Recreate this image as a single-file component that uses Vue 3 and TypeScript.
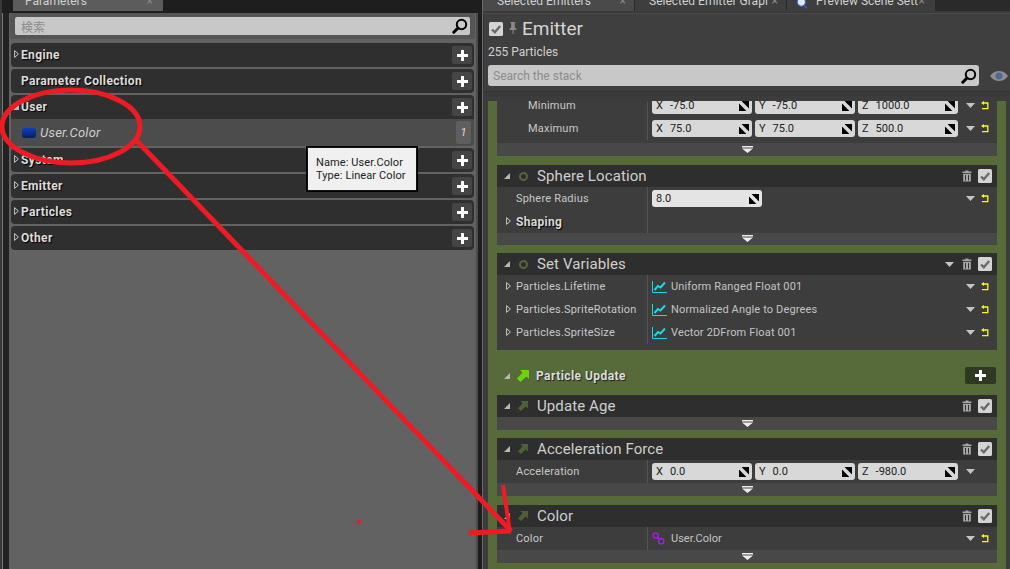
<script setup lang="ts">
interface Row {
  label: string
  kind: 'vec' | 'num' | 'curve' | 'link' | 'group'
  values?: string[]
  text?: string
  expand?: boolean
  indent?: boolean
  noReset?: boolean
}

interface Panel {
  title?: string
  icon?: 'circle' | 'arrow'
  menu?: boolean
  rows: Row[]
  footer: boolean
  cls?: string
}

const sections = ['Engine', 'Parameter Collection', 'User', 'System', 'Emitter', 'Particles', 'Other']

const firstPanels: Panel[] = [
  {
    cls: 'clipped',
    rows: [
      { label: 'Minimum', kind: 'vec', indent: true, values: ['X', '-75.0', 'Y', '-75.0', 'Z', '1000.0'] },
      { label: 'Maximum', kind: 'vec', indent: true, values: ['X', '75.0', 'Y', '75.0', 'Z', '500.0'] },
    ],
    footer: true,
  },
  {
    title: 'Sphere Location',
    icon: 'circle',
    cls: 'tight nudge',
    rows: [
      { label: 'Sphere Radius', kind: 'num', text: '8.0' },
      { label: 'Shaping', kind: 'group', expand: true },
    ],
    footer: true,
  },
  {
    title: 'Set Variables',
    icon: 'circle',
    menu: true,
    cls: 'padded',
    rows: [
      { label: 'Particles.Lifetime', kind: 'curve', expand: true, text: 'Uniform Ranged Float 001' },
      { label: 'Particles.SpriteRotation', kind: 'curve', expand: true, text: 'Normalized Angle to Degrees' },
      { label: 'Particles.SpriteSize', kind: 'curve', expand: true, text: 'Vector 2DFrom Float 001' },
    ],
    footer: false,
  },
]

const updatePanels: Panel[] = [
  { title: 'Update Age', icon: 'arrow', rows: [], footer: true },
  {
    title: 'Acceleration Force',
    icon: 'arrow',
    rows: [{ label: 'Acceleration', kind: 'vec', noReset: true, values: ['X', '0.0', 'Y', '0.0', 'Z', '-980.0'] }],
    footer: true,
  },
  {
    title: 'Color',
    icon: 'arrow',
    cls: 'nudge',
    rows: [{ label: 'Color', kind: 'link', text: 'User.Color' }],
    footer: true,
  },
]

const allPanels = [firstPanels, updatePanels]

function pairs(values: string[]) {
  const out: { axis: string; val: string }[] = []
  for (let i = 0; i < values.length; i += 2) out.push({ axis: values[i], val: values[i + 1] })
  return out
}
</script>

<template>
  <div class="app">
    <svg class="defs" width="0" height="0">
      <symbol id="spin" viewBox="0 0 10 10">
        <path d="M2.6 0H10V7.4L7.8 5.2L5 2.4ZM0 2.6L7.4 10H0Z" fill="#000" />
      </symbol>
      <symbol id="lens" viewBox="0 0 16 16">
        <circle cx="9.5" cy="6.5" r="4.7" fill="none" stroke="#000" stroke-width="2" />
        <path d="M6 10L1.8 14.2" stroke="#000" stroke-width="3" stroke-linecap="round" />
      </symbol>
      <symbol id="chev" viewBox="0 0 11 7">
        <path d="M0 0H11V1.4H0ZM0 2.6H11L5.5 7Z" fill="#eee" />
      </symbol>
      <symbol id="drop" viewBox="0 0 9 5">
        <path d="M0 0H9L4.5 5Z" fill="#c4c4c4" />
      </symbol>
      <symbol id="reset" viewBox="0 0 8 9">
        <path d="M2.6 2H6.8V7.6H1" fill="none" stroke="#f8f820" stroke-width="1.3" />
        <path d="M3 0V4L0 2Z" fill="#f8f820" />
      </symbol>
      <symbol id="trash" viewBox="0 0 10 12">
        <path d="M3.5 0.5H6.5V1.5H9.5V3H0.5V1.5H3.5ZM1.2 3.8H8.8V11.5H1.2ZM3 5V10.5H4V5ZM6 5V10.5H7V5Z" fill="#a8a8a8" fill-rule="evenodd" />
      </symbol>
      <symbol id="check" viewBox="0 0 14 14">
        <rect width="14" height="14" rx="1.5" fill="#d4d4d4" />
        <path d="M3 7.5L5.8 10.2L11.2 4" fill="none" stroke="#6a6a6a" stroke-width="2.4" />
      </symbol>
      <symbol id="arrow-icon" viewBox="0 0 12 12">
        <path d="M3 0H12V9L9.4 6.6L3.4 12L0 8.6L5.6 2.6Z" fill="currentColor" />
      </symbol>
      <symbol id="curve" viewBox="0 0 15 12">
        <path d="M0.5 0V11.5H15" fill="none" stroke="#19d8e8" stroke-width="1" />
        <path d="M2.5 9L6 5L8.5 6.5L13 1.5" fill="none" stroke="#19d8e8" stroke-width="2" />
      </symbol>
      <symbol id="link" viewBox="0 0 13 13">
        <circle cx="3.6" cy="3.6" r="2.6" fill="none" stroke="#a020d8" stroke-width="1.5" />
        <circle cx="9.2" cy="9.2" r="2.6" fill="none" stroke="#a020d8" stroke-width="1.5" />
        <path d="M5.4 5.4L7.4 7.4" stroke="#a020d8" stroke-width="1.5" />
      </symbol>
      <symbol id="corner" viewBox="0 0 7 7">
        <path d="M7 0V7H0Z" fill="#b8b8b8" />
      </symbol>
      <symbol id="closed" viewBox="0 0 5 8">
        <path d="M0.6 0.6L4.4 4L0.6 7.4Z" fill="none" stroke="#d8d8d8" stroke-width="0.9" />
      </symbol>
      <symbol id="plus" viewBox="0 0 11 11">
        <path d="M4 0H7V4H11V7H7V11H4V7H0V4H4Z" fill="#fff" />
      </symbol>
    </svg>

    <!-- left side -->
    <div class="left">
      <div class="tabs">
        <div class="tab param-tab"><span>Parameters</span><i>×</i></div>
      </div>
      <div class="left-body">
        <div class="search-wrap">
          <div class="search">
            <span class="placeholder cjk">検索</span>
            <svg class="lens"><use href="#lens" /></svg>
          </div>
        </div>
        <div class="sections">
          <template v-for="name in sections" :key="name">
            <div class="section" :class="{ open: name === 'User' }">
              <svg v-if="name === 'User'" class="tri-open"><use href="#corner" /></svg>
              <svg v-else-if="name !== 'Parameter Collection'" class="tri"><use href="#closed" /></svg>
              <span class="sec-name">{{ name }}</span>
              <button class="plus"><svg><use href="#plus" /></svg></button>
            </div>
            <div v-if="name === 'User'" class="param-row">
              <span class="pill"></span>
              <span class="param-name">User.Color</span>
              <span class="count">1</span>
            </div>
          </template>
        </div>
      </div>
    </div>

    <!-- right side -->
    <div class="right">
      <div class="tabs r-tabs">
        <div class="tab r-tab"><span>Selected Emitters</span><i>×</i></div>
        <div class="tab r-tab off"><span>Selected Emitter Grapl</span><i>×</i></div>
        <div class="tab r-tab off prev">
          <svg class="tab-icon" viewBox="0 0 16 16">
            <circle cx="7" cy="3" r="6" fill="#dfe8f5" stroke="#3a62c0" stroke-width="1.6" />
            <path d="M11 8L15 12" stroke="#3a62c0" stroke-width="2" />
          </svg>
          <span>Preview Scene Sett</span><i>×</i>
        </div>
      </div>

      <div class="head">
        <div class="head-top">
          <svg class="head-check"><use href="#check" /></svg>
          <svg class="pin" viewBox="0 0 8 12">
            <path d="M1.5 0H6.5V1H5.8V5.5L7.5 7V8H4.5V12H3.5V8H0.5V7L2.2 5.5V1H1.5Z" fill="#8a8a8a" />
          </svg>
          <span class="emitter">Emitter</span>
        </div>
        <div class="count-text">255 Particles</div>
        <div class="stack-search">
          <div class="search dark-text">
            <span class="placeholder">Search the stack</span>
            <svg class="lens"><use href="#lens" /></svg>
          </div>
          <svg class="eye" viewBox="0 0 18 10">
            <path d="M0 5C3 1 6 0 9 0C12 0 15 1 18 5C15 9 12 10 9 10C6 10 3 9 0 5Z" fill="#8f8f8f" />
            <circle cx="9" cy="5" r="3.6" fill="#4e6a96" />
          </svg>
        </div>
      </div>

      <div class="stack">
        <div class="green">
          <template v-for="(group, gi) in allPanels" :key="gi">
            <div v-if="gi === 1" class="update-head">
              <svg class="corner update-corner"><use href="#corner" /></svg>
              <svg class="update-icon"><use href="#arrow-icon" /></svg>
              <span class="update-title">Particle Update</span>
              <button class="update-add"><svg><use href="#plus" /></svg></button>
            </div>
            <div class="group">
              <div v-for="(p, pi) in group" :key="pi" class="panel" :class="p.cls">
                <div v-if="p.title" class="panel-head">
                  <svg class="corner"><use href="#corner" /></svg>
                  <svg v-if="p.icon === 'arrow'" class="p-arrow"><use href="#arrow-icon" /></svg>
                  <span v-else class="p-circle"></span>
                  <span class="panel-title">{{ p.title }}</span>
                  <svg v-if="p.menu" class="drop head-drop"><use href="#drop" /></svg>
                  <svg class="trash"><use href="#trash" /></svg>
                  <svg class="p-check"><use href="#check" /></svg>
                </div>
                <div class="rows">
                  <div v-for="r in p.rows" :key="r.label" class="row">
                    <div class="row-name" :class="{ indent: r.indent }">
                      <svg v-if="r.expand" class="row-tri"><use href="#closed" /></svg>
                      <span :class="{ strong: r.kind === 'group' }">{{ r.label }}</span>
                    </div>
                    <div class="row-value">
                      <template v-if="r.kind === 'vec'">
                        <div v-for="f in pairs(r.values || [])" :key="f.axis" class="field">
                          <span class="axis">{{ f.axis }}</span>
                          <span>{{ f.val }}</span>
                          <svg class="spin"><use href="#spin" /></svg>
                        </div>
                      </template>
                      <div v-else-if="r.kind === 'num'" class="field wide">
                        <span>{{ r.text }}</span>
                        <svg class="spin"><use href="#spin" /></svg>
                      </div>
                      <template v-else-if="r.kind === 'curve'">
                        <svg class="curve"><use href="#curve" /></svg>
                        <span class="val-text">{{ r.text }}</span>
                      </template>
                      <template v-else-if="r.kind === 'link'">
                        <svg class="link"><use href="#link" /></svg>
                        <span class="val-text link-text">{{ r.text }}</span>
                      </template>
                    </div>
                    <div v-if="r.kind !== 'group'" class="row-actions">
                      <svg class="drop"><use href="#drop" /></svg>
                      <svg class="reset" :class="{ hide: r.noReset }"><use href="#reset" /></svg>
                    </div>
                  </div>
                </div>
                <div v-if="p.footer" class="panel-foot">
                  <svg class="chev"><use href="#chev" /></svg>
                </div>
              </div>
            </div>
          </template>
        </div>
      </div>
    </div>

    <!-- tooltip over the list -->
    <div class="tooltip">
      <div>Name: User.Color</div>
      <div>Type: Linear Color</div>
    </div>

    <!-- hand drawn red markup -->
    <svg class="markup" viewBox="0 0 1010 569">
      <ellipse cx="71" cy="126.5" rx="69" ry="36.5" fill="none" stroke="#ed1c24" stroke-width="5" />
      <path d="M137 141L511 531" fill="none" stroke="#ed1c24" stroke-width="5" />
      <path d="M503 485L510 532" fill="none" stroke="#ed1c24" stroke-width="4" />
      <path d="M469 533L511 531" fill="none" stroke="#ed1c24" stroke-width="5" />
      <circle cx="359" cy="522" r="2.2" fill="#ed1c24" />
    </svg>
  </div>
</template>

<style scoped>
.app {
  position: relative;
  width: 1010px;
  height: 569px;
  display: flex;
  overflow: hidden;
  background: #1e1e1e;
  font-family: Roboto, "Noto Sans CJK JP", sans-serif;
  font-size: 11px;
  color: #c8c8c8;
}

.defs {
  position: absolute;
}

button {
  border: none;
  padding: 0;
  font-family: inherit;
}

/* tabs */
.tabs {
  height: 11px;
  display: flex;
  flex-shrink: 0;
  overflow: hidden;
}

.tab {
  height: 11px;
  line-height: 2px;
  display: flex;
  position: relative;
  font-size: 12px;
  background: #5c5c5c;
  color: #d0d0d0;
  overflow: hidden;
}

.tab i {
  position: absolute;
  font-style: normal;
  color: #888;
}

.param-tab {
  width: 150px;
  margin-left: 11px;
  padding-left: 12px;
  box-sizing: border-box;
}

.param-tab i {
  right: 10px;
}

.r-tabs {
  background: #2a2a2a;
}

.r-tab {
  width: 151px;
  padding-left: 14px;
  box-sizing: border-box;
  margin-right: 1px;
  background: #4a4a4a;
}

.r-tab i {
  right: 8px;
}

.r-tab.off {
  background: #3e3e3e;
}

.r-tab.prev {
  width: 148px;
  padding-left: 7px;
}

.r-tab.prev i {
  right: 10px;
}

.tab-icon {
  width: 16px;
  height: 11px;
  margin-right: 6px;
}

/* left */
.left {
  width: 478px;
  flex-shrink: 0;
  display: flex;
  flex-direction: column;
  border-left: 2px solid #3a3a3a;
  box-sizing: border-box;
}

.left-body {
  flex: 1;
  margin: 2px 0 0 7px;
  padding: 0 2px 0 2px;
  background: #626262;
  border-left: 0;
  border-right: 2px solid #4c4c4c;
  box-shadow: -6px 0 0 #222, -7px 0 0 #777;
}

.search-wrap {
  margin: 0 -1px 4px -1px;
  padding: 4px 5px;
  height: 18px;
  background: #555;
  border-radius: 3px;
}

.search {
  flex: 1;
  height: 100%;
  display: flex;
  align-items: center;
  padding: 0 2px 0 6px;
  background: #c8c8c8;
  border-radius: 2px;
  box-sizing: border-box;
}

.placeholder {
  flex: 1;
  color: #8c8c8c;
  font-size: 12px;
}

.lens {
  width: 16px;
  height: 16px;
}

.sections {
  display: flex;
  flex-direction: column;
}

.section {
  height: 24px;
  margin-bottom: 2px;
  display: flex;
  align-items: center;
  position: relative;
  padding: 0 2px 0 10px;
  background: #2f2f2f;
  border-radius: 4px;
}

.section.open {
  margin-bottom: 0;
  border-radius: 4px 4px 0 0;
}

.tri {
  position: absolute;
  left: 3px;
  top: 7px;
  width: 5px;
  height: 8px;
}

.tri-open {
  position: absolute;
  left: 2px;
  top: 9px;
  width: 6px;
  height: 6px;
}

.sec-name {
  flex: 1;
  font-size: 12px;
  font-weight: 700;
  letter-spacing: 0.35px;
  color: #dcdcdc;
  text-shadow: 1px 1px 1px #000;
}

.plus {
  width: 20px;
  height: 18px;
  display: flex;
  align-items: center;
  justify-content: center;
  border-radius: 2px;
  background: #454545;
}

.plus svg,
.update-add svg {
  width: 11px;
  height: 11px;
}

.param-row {
  height: 27px;
  margin-bottom: 2px;
  display: flex;
  align-items: center;
  padding: 0 3px 0 11px;
  background: #4c4c4c;
  border-radius: 0 0 4px 4px;
}

.pill {
  width: 14px;
  height: 10px;
  margin-right: 4px;
  border-radius: 3px;
  background: linear-gradient(#0a3fc4, #06205e);
}

.param-name {
  flex: 1;
  font-size: 13px;
  font-style: italic;
  letter-spacing: 0.25px;
  color: #cfcfcf;
}

.count {
  width: 15px;
  height: 23px;
  line-height: 23px;
  text-align: center;
  background: #5e5e5e;
  border-radius: 2px;
  font-style: italic;
  color: #ddd;
}

/* right */
.right {
  flex: 1;
  min-width: 0;
  margin-left: 4px;
  display: flex;
  flex-direction: column;
  border-left: 1px solid #6a6a6a;
  background: #3a3a3a;
}

.head {
  height: 79px;
  margin: 2px 0 4px 0;
  padding: 0 0 0 4px;
  background: #3f3f3f;
  box-sizing: border-box;
  border-top: 1px solid #4a4a4a;
  border-left: 1px solid #333;
  border-bottom: 1px solid #333;
}

.head-top {
  height: 30px;
  display: flex;
  align-items: center;
}

.head-check {
  width: 14px;
  height: 14px;
  margin-left: 1px;
}

.pin {
  width: 8px;
  height: 12px;
  margin: 0 5px 2px 6px;
}

.emitter {
  font-size: 19px;
  color: #d4d4d4;
  line-height: 24px;
}

.count-text {
  font-size: 12px;
  line-height: 14px;
  margin: 1px 0 0;
  color: #d0d0d0;
}

.stack-search {
  height: 21px;
  margin-top: 6px;
  display: flex;
  align-items: center;
}

.stack-search .search {
  padding-left: 5px;
  border-radius: 3px;
  flex: none;
  width: 491px;
}

.eye {
  width: 18px;
  height: 10px;
  margin-left: 11px;
}

.stack {
  flex: 1;
  min-height: 0;
  padding: 5px 4px 0 5px;
  overflow: hidden;
  background: #3c3c3c;
}

.green {
  height: 100%;
  padding: 0 9px;
  overflow: hidden;
  background: #566a3a;
}

.group {
  display: flex;
  flex-direction: column;
  gap: 8px;
}

.panel {
  background: #3d3d3d;
}

.nudge {
  margin-top: 1px;
}

.clipped {
  margin-top: -7px;
}

.clipped .rows {
  padding-bottom: 3px;
}

.padded {
  padding-bottom: 6px;
}

.panel-head {
  height: 22px;
  display: flex;
  align-items: center;
  padding: 0 5px 0 7px;
  background: #2e2e2e;
}

.corner {
  width: 6px;
  height: 6px;
  margin-right: 7px;
  flex-shrink: 0;
}

.p-circle {
  width: 5px;
  height: 5px;
  margin: 0 9px 0 2px;
  border: 2px solid #55673a;
  border-radius: 50%;
}

.p-arrow {
  width: 10px;
  height: 10px;
  margin: 0 9px 0 1px;
  color: #4e6136;
}

.panel-title {
  flex: 1;
  font-size: 15px;
  letter-spacing: 0.1px;
  color: #cfcfcf;
}

.trash {
  width: 10px;
  height: 12px;
  margin-right: 6px;
}

.head-drop {
  margin-right: 8px;
}

.p-check {
  width: 14px;
  height: 14px;
}

.row {
  height: 23px;
  display: flex;
  align-items: center;
}

.row-name {
  width: 151px;
  height: 100%;
  display: flex;
  align-items: center;
  flex-shrink: 0;
  box-sizing: border-box;
  padding-left: 19px;
  position: relative;
  border-right: 1px solid #555;
  letter-spacing: 0.2px;
}

.row-name.indent {
  padding-left: 31px;
}

.strong {
  font-size: 12px;
  font-weight: 700;
  letter-spacing: 0.3px;
  color: #d8d8d8;
  text-shadow: 1px 1px 1px #000;
}

.row-tri {
  position: absolute;
  left: 9px;
  top: 7px;
  width: 5px;
  height: 8px;
}

.row-value {
  flex: 1;
  height: 100%;
  display: flex;
  align-items: center;
  gap: 3px;
  padding-left: 4px;
  min-width: 0;
}

.field {
  width: 100px;
  height: 17px;
  display: flex;
  align-items: center;
  gap: 7px;
  padding-left: 4px;
  position: relative;
  box-sizing: border-box;
  background: #d8d8d8;
  border-radius: 3px;
  color: #222;
}

.field.wide {
  width: 110px;
  background: #e4e4e4;
}

.spin {
  position: absolute;
  right: 3px;
  top: 4px;
  width: 10px;
  height: 10px;
}

.curve {
  width: 15px;
  height: 12px;
  margin-right: 1px;
}

.link {
  width: 13px;
  height: 13px;
  margin-right: 3px;
}

.val-text {
  color: #c4c4c4;
  letter-spacing: 0.15px;
}

.link-text {
  letter-spacing: 0;
}

.row-actions {
  width: 31px;
  flex-shrink: 0;
  display: flex;
  align-items: center;
  justify-content: flex-end;
  gap: 6px;
  padding-right: 8px;
  box-sizing: content-box;
  margin-left: -8px;
}

.drop {
  width: 9px;
  height: 5px;
  flex-shrink: 0;
}

.reset {
  width: 8px;
  height: 9px;
}

.reset.hide {
  visibility: hidden;
}

.panel-foot {
  height: 13px;
  display: flex;
  align-items: center;
  justify-content: center;
  background: #484848;
}

.tight .panel-foot {
  height: 12px;
}

.tight .chev {
  margin-bottom: 2px;
}

.chev {
  width: 11px;
  height: 7px;
}

.update-head {
  height: 45px;
  display: flex;
  align-items: center;
  padding: 6px 1px 0 7px;
  box-sizing: border-box;
}

.update-icon {
  width: 12px;
  height: 12px;
  margin-right: 7px;
  color: #6cd40c;
}

.update-title {
  flex: 1;
  font-size: 12px;
  font-weight: 700;
  letter-spacing: 0.45px;
  color: #dcdcdc;
  text-shadow: 1px 1px 1px #222;
}

.update-add {
  width: 31px;
  height: 17px;
  display: flex;
  align-items: center;
  justify-content: center;
  border-radius: 2px;
  background: #2d3923;
}

/* overlay */
.tooltip {
  position: absolute;
  left: 306px;
  top: 146px;
  width: 112px;
  height: 46px;
  padding: 9px 0 0 9px;
  box-sizing: border-box;
  background: #f0f0f0;
  border: 1px solid #000;
  box-shadow: inset 0 0 0 1px #111;
  color: #222;
  font-size: 11px;
  line-height: 13px;
  letter-spacing: 0.1px;
}

.markup {
  position: absolute;
  left: 0;
  top: 0;
  width: 1010px;
  height: 569px;
  pointer-events: none;
}
</style>
